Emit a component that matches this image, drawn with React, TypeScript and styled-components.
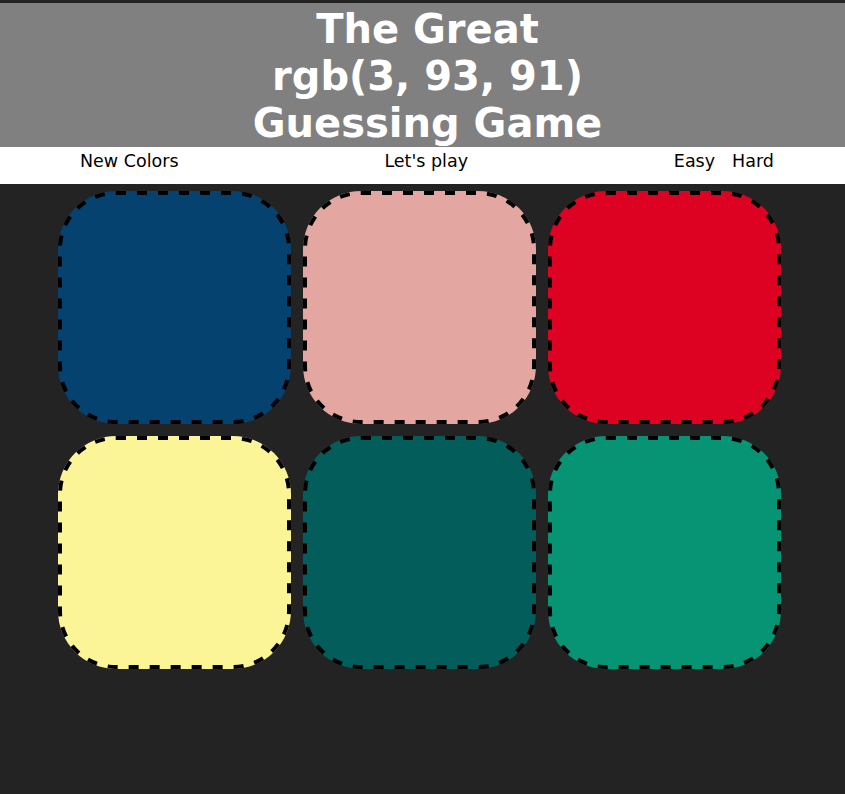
import styled, { createGlobalStyle } from 'styled-components'

const GlobalStyle = createGlobalStyle`
  html, body {
    margin: 0;
    padding: 0;
    background-color: #232323;
    font-family: "DejaVu Sans", Verdana, sans-serif;
  }
`

const Header = styled.h1`
  margin: 3px 0 0;
  padding: 3px 0 0 10px;
  height: 141px;
  background-color: #808080;
  color: #ffffff;
  text-align: center;
  font-size: 40px;
  line-height: 47px;
  font-weight: bold;
`

const Stripe = styled.div`
  height: 37px;
  box-sizing: border-box;
  background-color: #ffffff;
  display: flex;
  justify-content: space-between;
  align-items: flex-start;
  padding: 3px 71px 0 80px;
  font-size: 17.5px;
  line-height: 22px;
  color: #000000;
`

const NavButton = styled.span`
  cursor: pointer;
`

const ModeGroup = styled.div`
  display: flex;
  gap: 17px;
`

const Board = styled.div`
  display: grid;
  grid-template-columns: repeat(3, 233px);
  gap: 12px;
  padding: 7px 0 0 58px;
`

const Square = styled.div<{ $color: string }>`
  position: relative;
  width: 233px;
  height: 233px;
  border-radius: 25%;
  background-color: ${p => p.$color};
  cursor: pointer;
`

const DashRing = styled.svg`
  position: absolute;
  inset: 0;
  width: 100%;
  height: 100%;
  overflow: visible;
`

const colors = [
  'rgb(5, 66, 111)',
  'rgb(227, 166, 160)',
  'rgb(221, 2, 33)',
  'rgb(251, 245, 152)',
  'rgb(3, 93, 91)',
  'rgb(6, 148, 117)',
]

const App = () => {
  return (
    <>
      <GlobalStyle />
      <Header>
        The Great
        <br />
        rgb(3, 93, 91)
        <br />
        Guessing Game
      </Header>
      <Stripe>
        <NavButton>New Colors</NavButton>
        <NavButton>Let's play</NavButton>
        <ModeGroup>
          <NavButton>Easy</NavButton>
          <NavButton>Hard</NavButton>
        </ModeGroup>
      </Stripe>
      <Board>
        {colors.map((c, i) => (
          <Square key={i} $color={c}>
            <DashRing viewBox="0 0 233 233">
              <rect
                x="2"
                y="2"
                width="229"
                height="229"
                rx="56"
                fill="none"
                stroke="#000"
                strokeWidth="4"
                strokeDasharray="10 11"
              />
            </DashRing>
          </Square>
        ))}
      </Board>
    </>
  )
}

export default App
